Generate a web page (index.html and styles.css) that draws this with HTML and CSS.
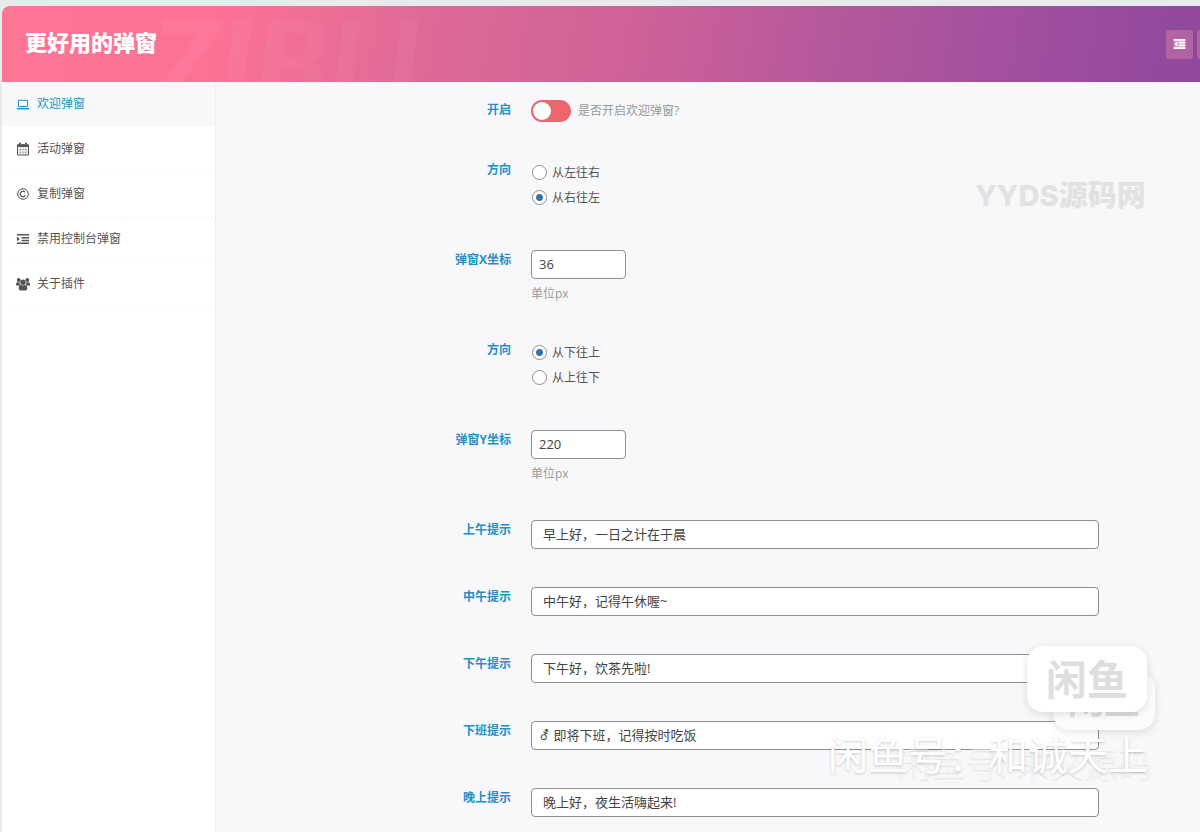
FILE: index.html
```html
<!DOCTYPE html>
<html lang="zh-CN">
<head>
<meta charset="utf-8">
<title>更好用的弹窗</title>
<link rel="stylesheet" href="styles.css">
</head>
<body>
<div class="panel">
  <header class="header">
    <span class="header-ghost" aria-hidden="true">ZIBLL</span>
    <h1 class="title">更好用的弹窗</h1>
    <div class="actions">
      <button class="action" type="button" aria-label="展开全部">
        <svg class="action-icon" viewBox="0 0 14 12" fill="currentColor"><path d="M0 0h14v2H0zM6 3.300h8v2H6zM6 6.600h8v2H6zM0 10h14v2H0zM4.500 3v6L1 6z"/><path d="M0 0h14v12H0z" opacity=".35"/></svg>
      </button>
      <button class="action" type="button" aria-label="保存"></button>
    </div>
  </header>
  <div class="body">
    <nav class="sidebar">
      <a class="nav-item active" href="#welcome">
        <svg class="nav-icon" viewBox="0 0 14 14" fill="none" stroke="currentColor"><path d="M2.500 9.500V3.300h9v6.200z"/><path d="M.8 11.700h12.400" stroke-width="1.500"/></svg>
        欢迎弹窗</a>
      <a class="nav-item" href="#event">
        <svg class="nav-icon" viewBox="0 0 14 14" fill="none" stroke="currentColor"><path d="M1.500 3h11v10h-11z"/><path d="M1 3.800h12" stroke-width="2.400"/><path d="M4 .7v3M10 .7v3M7 2v1.500" stroke-width="2"/><path d="M1.500 7.500h11M1.500 10.200h11M4.300 5v8M7 5v8M9.700 5v8" stroke-width=".5" opacity=".7"/></svg>
        活动弹窗</a>
      <a class="nav-item" href="#copy">
        <svg class="nav-icon" viewBox="0 0 14 14" fill="none" stroke="currentColor"><circle cx="7" cy="7" r="5.300"/><path d="M9.300 5.300a2.800 2.800 0 1 0 0 3.400" stroke-width="1.200"/></svg>
        复制弹窗</a>
      <a class="nav-item" href="#console">
        <svg class="nav-icon" viewBox="0 0 14 14" fill="currentColor"><path d="M1 2h12v1.500H1zM5.500 4.900H13v1.500H5.500zM5.500 7.700H13v1.500H5.500zM1 10.600h12v1.500H1zM1 4.700v4.600L3.900 7z"/></svg>
        禁用控制台弹窗</a>
      <a class="nav-item" href="#about">
        <svg class="nav-icon" viewBox="0 0 14 14" fill="currentColor"><circle cx="2.700" cy="3" r="1.900"/><circle cx="11.300" cy="3" r="1.900"/><circle cx="7" cy="5.200" r="2.700"/><path d="M0 8.500V6.700q0-1.500 1.500-1.500h2q0 2 1.200 3.300zM14 8.500V6.700q0-1.500-1.500-1.500h-2q0 2-1.200 3.300zM2.700 11.500Q2.700 8 4.800 7.800q2.200 1.400 4.400 0 2.100.2 2.100 3.700 0 2-1.800 2h-5q-1.800 0-1.800-2z"/></svg>
        关于插件</a>
    </nav>
    <form class="form">
      <div class="row row-switch">
        <label class="label" for="enable">开启</label>
        <div class="field switch-field">
          <input class="switch" type="checkbox" id="enable">
          <span class="hint">是否开启欢迎弹窗?</span>
        </div>
      </div>
      <div class="row row-tall" role="radiogroup" aria-labelledby="dir-x">
        <span class="label" id="dir-x">方向</span>
        <div class="field">
          <label class="choice"><input class="radio" type="radio" name="dirx">从左往右</label>
          <label class="choice"><input class="radio" type="radio" name="dirx" checked>从右往左</label>
        </div>
      </div>
      <div class="row row-tall">
        <label class="label" for="pos-x">弹窗X坐标</label>
        <div class="field">
          <input class="input input-small" type="text" id="pos-x" value="36">
          <span class="hint">单位px</span>
        </div>
      </div>
      <div class="row row-tall" role="radiogroup" aria-labelledby="dir-y">
        <span class="label" id="dir-y">方向</span>
        <div class="field">
          <label class="choice"><input class="radio" type="radio" name="diry" checked>从下往上</label>
          <label class="choice"><input class="radio" type="radio" name="diry">从上往下</label>
        </div>
      </div>
      <div class="row row-tall">
        <label class="label" for="pos-y">弹窗Y坐标</label>
        <div class="field">
          <input class="input input-small" type="text" id="pos-y" value="220">
          <span class="hint">单位px</span>
        </div>
      </div>
      <div class="row">
        <label class="label" for="t1">上午提示</label>
        <div class="field"><input class="input input-text" type="text" id="t1" value="早上好，一日之计在于晨"></div>
      </div>
      <div class="row">
        <label class="label" for="t2">中午提示</label>
        <div class="field"><input class="input input-text" type="text" id="t2" value="中午好，记得午休喔~"></div>
      </div>
      <div class="row">
        <label class="label" for="t3">下午提示</label>
        <div class="field"><input class="input input-text" type="text" id="t3" value="下午好，饮茶先啦!"></div>
      </div>
      <div class="row">
        <label class="label" for="t4">下班提示</label>
        <div class="field"><input class="input" type="text" id="t4" value="⚦ 即将下班，记得按时吃饭"></div>
      </div>
      <div class="row">
        <label class="label" for="t5">晚上提示</label>
        <div class="field"><input class="input input-text" type="text" id="t5" value="晚上好，夜生活嗨起来!"></div>
      </div>
    </form>
  </div>
</div>
<div class="mark mark-site">YYDS源码网</div>
<div class="badge badge-back">闲鱼</div>
<div class="badge badge-front">闲鱼</div>
<div class="mark mark-back">闲鱼号: 未又源码</div>
<div class="mark mark-front">闲鱼号：和诚天上</div>
</body>
</html>
```
FILE: styles.css
```css
* { box-sizing: border-box; }

body {
  margin: 0;
  height: 100vh;
  position: relative;
  overflow: hidden;
  background: #e9eaec;
  font-family: "Open Sans", "Noto Sans CJK SC", sans-serif;
  font-size: 12px;
  line-height: 20px;
  color: #555;
}

.panel {
  min-height: 100vh;
  padding: 6px 0 0 2px;
  display: flex;
  flex-direction: column;
}

.header {
  position: relative;
  flex: none;
  height: 76px;
  padding: 0 0 0 23px;
  display: flex;
  align-items: center;
  overflow: hidden;
  border-radius: 8px 0 0 0;
  background: linear-gradient(100deg, #ff7595 0%, #fc7295 18%, #de6997 36%, #cf6298 52%, #b6599b 68%, #a5509f 82%, #8e489c 100%);
}

.header-ghost {
  position: absolute;
  left: 150px;
  top: 10px;
  font: italic 900 120px/90px Lato, sans-serif;
  color: rgba(255, 255, 255, .04);
}

.title {
  flex: 1;
  margin: 0;
  padding-bottom: 4px;
  font-size: 22px;
  line-height: 32px;
  font-weight: 900;
  color: #fff;
}

.actions {
  width: 34px;
  display: flex;
  gap: 4px;
}

.action {
  flex: none;
  width: 27px;
  height: 29px;
  padding: 0;
  display: flex;
  align-items: center;
  justify-content: center;
  border: 0;
  border-radius: 3px;
  background: rgba(230, 140, 170, .4);
  color: #fff;
}

.action-icon { width: 13px; height: 10px; }

.body {
  flex: 1;
  display: flex;
  background: #f8f8fa;
}

.sidebar {
  flex: none;
  width: 214px;
  background: #fff;
  border-right: 1px solid #f0f1f3;
}

.nav-item {
  height: 45px;
  padding: 0 14px;
  display: flex;
  align-items: center;
  gap: 7px;
  border-bottom: 1px solid #fafafb;
  color: #555;
  text-decoration: none;
}

.nav-item.active {
  background: #f7f8fa;
  color: #1d93c0;
}

.nav-icon { width: 14px; height: 14px; }

.form {
  flex: 1;
  padding: 18px 101px 0 0;
}

.row {
  display: grid;
  grid-template-columns: 295px 1fr;
  column-gap: 20px;
  align-items: start;
  padding-bottom: 38px;
}

.row-tall {
  min-height: 90px;
  padding-bottom: 0;
}

.row-switch {
  min-height: 60px;
  padding-bottom: 0;
}

.label {
  text-align: right;
  font-weight: 700;
  color: #2490c8;
}

.field {
  display: flex;
  flex-direction: column;
  align-items: flex-start;
}

.switch-field {
  flex-direction: row;
  align-items: center;
  gap: 7px;
}

.hint {
  line-height: 22px;
  color: #999;
}

.field .input-small + .hint { margin-top: 4px; }

.switch {
  appearance: none;
  width: 40px;
  height: 22px;
  margin: 0;
  padding: 2px;
  border-radius: 11px;
  background: #ed666d;
}

.switch::before {
  content: "";
  display: block;
  width: 18px;
  height: 18px;
  border-radius: 50%;
  background: #fff;
}

.switch:checked::before { margin-left: auto; }

.choice {
  height: 25px;
  display: flex;
  align-items: center;
  gap: 5px;
}

.radio {
  appearance: none;
  width: 15px;
  height: 15px;
  margin: 0 0 0 1px;
  border: 1px solid #8c8f94;
  border-radius: 50%;
  background: #fff;
}

.radio:checked {
  background: radial-gradient(circle, #3572a8 3px, #fff 4px);
}

.input {
  width: 100%;
  height: 29px;
  padding: 0 7px 2px;
  border: 1px solid #8c8f94;
  border-radius: 4px;
  background: #fff;
  font: inherit;
  font-size: 13px;
  color: #444;
}

.input-small { width: 95px; }

.input-text { padding-left: 11px; }

.mark {
  position: absolute;
  white-space: nowrap;
  pointer-events: none;
}

.mark-site {
  left: 975px;
  top: 176px;
  font-family: Inter, "Noto Sans CJK SC", sans-serif;
  font-size: 29px;
  line-height: 40px;
  font-weight: 800;
  color: #e2e2e3;
}

.mark-back {
  left: 897px;
  top: 739px;
  font-size: 34px;
  line-height: 50px;
  font-weight: 300;
  color: rgba(255, 255, 255, .7);
  text-shadow: 0 1px 2px rgba(0, 0, 0, .12);
}

.mark-front {
  left: 828px;
  top: 724px;
  font-family: "Noto Sans CJK SC", sans-serif;
  font-size: 40px;
  line-height: 58px;
  font-weight: 400;
  color: #fff;
  text-shadow: 0 1px 3px rgba(0, 0, 0, .2);
}

.badge {
  position: absolute;
  display: flex;
  align-items: center;
  justify-content: center;
  border-radius: 16px;
  background: #fff;
  box-shadow: 0 2px 8px rgba(0, 0, 0, .12);
  font-weight: 700;
  color: #dededf;
}

.badge-front {
  left: 1027px;
  top: 646px;
  width: 120px;
  height: 66px;
  font-size: 41px;
}

.badge-back {
  left: 1053px;
  top: 672px;
  width: 102px;
  height: 58px;
  font-size: 36px;
  background: #fcfcfd;
}
```
